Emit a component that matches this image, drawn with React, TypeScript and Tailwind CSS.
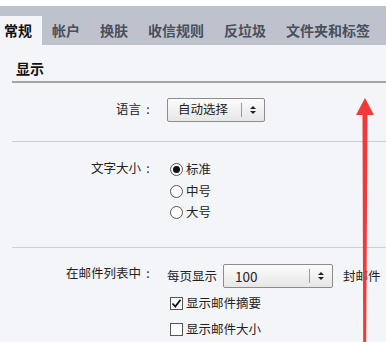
import React from 'react';

const FONT = { fontFamily: '"Microsoft YaHei", "Noto Sans CJK SC", "Noto Sans", sans-serif' };

const tabs = ['常规', '帐户', '换肤', '收信规则', '反垃圾', '文件夹和标签'];

const SelectBox: React.FC<{ value: string; width: number; textPad: number; size: number }> = ({ value, width, textPad, size }) => (
  <div
    className="h-[24px] flex items-center border border-[#8c8c8c] rounded-[2px] bg-gradient-to-b from-[#fcfcfc] to-[#e6e6e6]"
    style={{ width }}
  >
    <span className="flex-1 text-[#222]" style={{ paddingLeft: textPad, fontSize: size }}>{value}</span>
    <span className="w-px h-[14px] bg-[#9a9a9a]" />
    <span className="w-[22px] flex flex-col items-center justify-center gap-[2px]">
      <svg width="6" height="3" viewBox="0 0 6 3"><path d="M0 3 L3 0 L6 3 Z" fill="#222" /></svg>
      <svg width="6" height="3" viewBox="0 0 6 3"><path d="M0 0 L3 3 L6 0 Z" fill="#222" /></svg>
    </span>
  </div>
);

const Radio: React.FC<{ checked?: boolean; label: string }> = ({ checked, label }) => (
  <div className="h-[21.5px] flex items-center">
    <span className="w-[13px] h-[13px] rounded-full border border-[#555] bg-white flex items-center justify-center">
      {checked && <span className="w-[7px] h-[7px] rounded-full bg-[#111]" />}
    </span>
    <span className="ml-[3px] text-[12.5px] text-[#222]">{label}</span>
  </div>
);

const Check: React.FC<{ checked?: boolean; label: string }> = ({ checked, label }) => (
  <div className="h-[26px] flex items-center">
    <span className="w-[13px] h-[13px] border border-[#555] bg-white flex items-center justify-center">
      {checked && (
        <svg width="11" height="11" viewBox="0 0 11 11">
          <path d="M1.5 5.5 L4.3 8.5 L9.5 1.8" stroke="#111" strokeWidth="1.8" fill="none" />
        </svg>
      )}
    </span>
    <span className="ml-[3px] text-[12.5px] text-[#222]">{label}</span>
  </div>
);

const Label: React.FC<{ text: string }> = ({ text }) => (
  <div className="w-[143px] mr-[12px] shrink-0 flex justify-end text-[12.5px] text-[#222]">
    <span>{text}</span>
    <span className="w-[14px] text-center">:</span>
  </div>
);

export default function App() {
  return (
    <div className="relative w-[386px] h-[342px] overflow-hidden bg-white" style={FONT}>
      <div className="h-[6px] bg-white" />
      <div className="h-[39px] bg-[#bec2cd] flex items-end">
        {tabs.map((t, i) => (
          <div
            key={t}
            className={
              i === 0
                ? 'h-[29px] pl-[4px] pr-[10px] bg-[#f4f5f8] text-[14px] font-bold text-[#111] flex items-center'
                : 'h-[29px] px-[10px] text-[14px] font-bold text-[#4a4f5c] flex items-center'
            }
          >
            {t}
          </div>
        ))}
      </div>
      <div className="bg-[#f4f5f8] h-[297px] pl-[12px]">
        <div className="h-[38px] border-b-2 border-[#a3a3a3] pl-[4px] pt-[16px] text-[14px] font-bold text-[#111] leading-none">
          显示
        </div>
        <div className="h-[59px] border-b border-[#cfcfcf] flex items-center pb-[5px]">
          <Label text="语言" />
          <SelectBox value="自动选择" width={98} textPad={10} size={12.5} />
        </div>
        <div className="h-[106px] border-b border-[#cfcfcf] pt-[17px] flex">
          <Label text="文字大小" />
          <div className="ml-[3px] flex flex-col">
            <Radio checked label="标准" />
            <Radio label="中号" />
            <Radio label="大号" />
          </div>
        </div>
        <div className="pt-[16px] flex">
          <Label text="在邮件列表中" />
          <div className="flex flex-col">
            <div className="h-[24px] flex items-center text-[12.5px] text-[#222]">
              <span>每页显示</span>
              <div className="ml-[6px]">
                <SelectBox value="100" width={110} textPad={11} size={13.5} />
              </div>
              <span className="ml-[10px]">封邮件</span>
            </div>
            <div className="ml-[3px] mt-[2px]">
              <Check checked label="显示邮件摘要" />
              <Check label="显示邮件大小" />
            </div>
          </div>
        </div>
      </div>
      <svg className="absolute left-[352px] top-[97px]" width="26" height="245" viewBox="0 0 26 245">
        <path d="M13 1 L22 18 L15.5 18 L14.2 245 L11.2 245 L10.5 18 L4 18 Z" fill="#f03a3a" />
      </svg>
    </div>
  );
}
